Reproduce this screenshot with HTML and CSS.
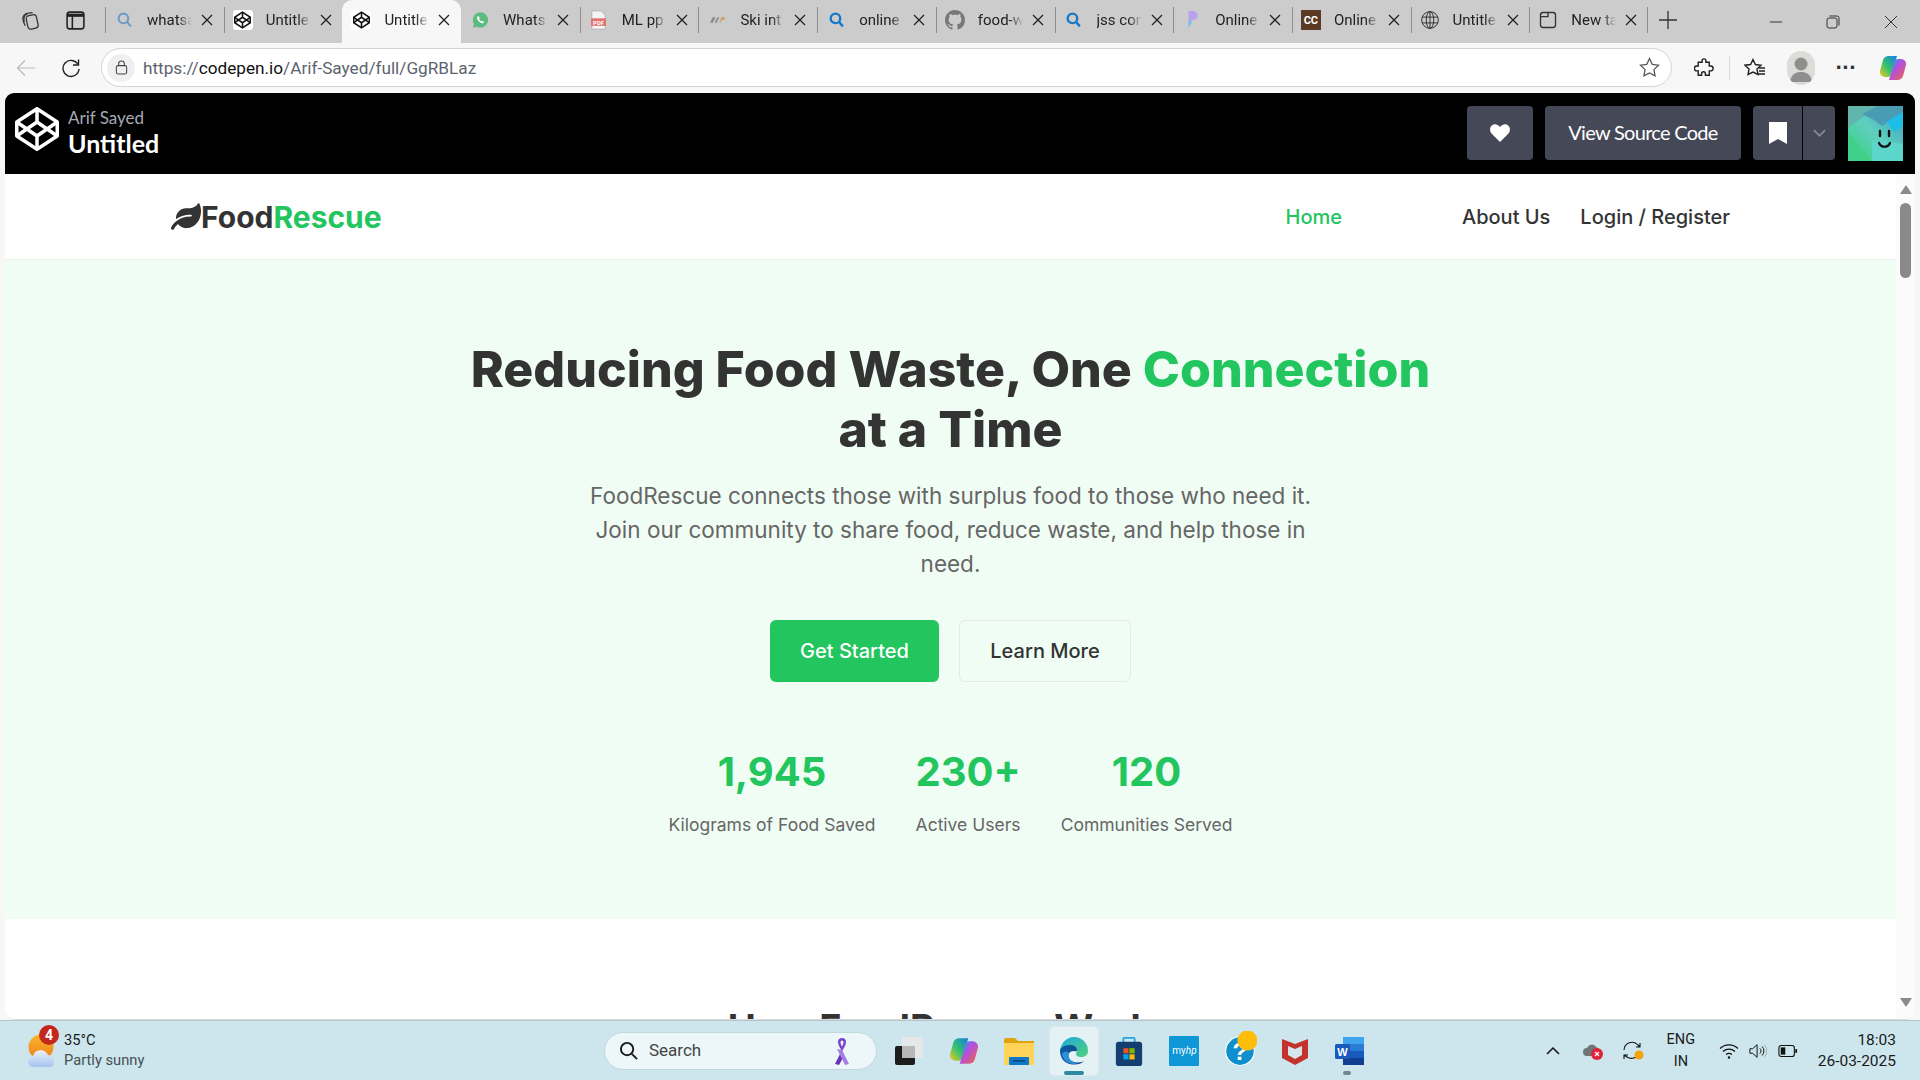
FILE: index.html
```html
<!DOCTYPE html>
<html lang="en">
<head>
<meta charset="utf-8">
<title>FoodRescue</title>
<link rel="stylesheet" href="styles.css">
</head>
<body>
<svg class="defs" width="0" height="0"><defs><symbol id="xi" viewBox="0 0 12 12"><path d="M1 1l10 10M11 1L1 11" fill="none" stroke="#222" stroke-width="1.300"/></symbol></defs></svg>
<div class="browser">
  <div class="tabstrip">
    <div class="strip-btns">
      <svg class="ic20" viewBox="0 0 20 20" fill="none" stroke="#333" stroke-width="1.200"><rect x="6.500" y="5" width="10" height="13" rx="3" transform="rotate(-12 11 11)"/><path d="M5 15C3.500 12 2.500 8 3 6.500 3.500 4.500 6 3 8 3l4-.5"/><path d="M4 11.500C3 8 4 5 7 3.500"/></svg>
      <svg class="ic20" viewBox="0 0 20 20" fill="none" stroke="#222" stroke-width="1.500"><rect x="2" y="2" width="16" height="16" rx="2.500"/><path d="M2 5h16" stroke-width="3"/><path d="M7 5v13"/></svg>
    </div>
    <div class="tab"><div class="tab-in"><span class="fav"><svg viewBox="0 0 16 16" fill="none" stroke="#6f9cc4" stroke-width="2"><circle cx="7" cy="6.500" r="4.500"/><path d="M10.500 10l3.500 4"/></svg></span><span class="tab-t">whatsa</span><svg class="x"><use href="#xi"/></svg></div></div>
    <div class="tab"><div class="tab-in"><span class="fav white"><svg viewBox="0 0 100 100" fill="none" stroke="#111" stroke-width="9"><use href="#cp"/></svg></span><span class="tab-t">Untitle</span><svg class="x"><use href="#xi"/></svg></div></div>
    <div class="tab active"><div class="tab-in"><span class="fav white"><svg viewBox="0 0 100 100" fill="none" stroke="#111" stroke-width="9"><use href="#cp"/></svg></span><span class="tab-t">Untitle</span><svg class="x"><use href="#xi"/></svg></div></div>
    <div class="tab nosep"><div class="tab-in"><span class="fav"><svg viewBox="0 0 20 20"><path d="M10 1a9 9 0 0 0-7.700 13.600L1 19l4.500-1.200A9 9 0 1 0 10 1z" fill="#5dbb80"/><path d="M7 5.500c-1.500 1-1.500 3 .5 5.500s4.500 3.500 6 2.500l.5-1.500-2.200-1.200-1 .8c-1-.5-2-1.500-2.500-2.700l.8-1L8 5.500z" fill="#fff"/></svg></span><span class="tab-t">Whats</span><svg class="x"><use href="#xi"/></svg></div></div>
    <div class="tab"><div class="tab-in"><span class="fav"><svg viewBox="0 0 20 24"><path d="M2 1h11l5 5v17H2z" fill="#f4f4f4" stroke="#aaa"/><rect x="1" y="10" width="18" height="9" fill="#e2726e"/><text x="10" y="17.500" text-anchor="middle" font-size="7" font-weight="700" fill="#fff" font-family="Roboto">PDF</text></svg></span><span class="tab-t">ML pp</span><svg class="x"><use href="#xi"/></svg></div></div>
    <div class="tab"><div class="tab-in"><span class="fav"><svg viewBox="0 0 18 18"><path d="M1 12l3-6h3l-3 6zM6 12l3-6h2l-3 6z" fill="#8a8a8a"/><path d="M11 12l2-6h4l-1 3h-3l-1 3z" fill="#c4a060"/></svg></span><span class="tab-t">Ski int</span><svg class="x"><use href="#xi"/></svg></div></div>
    <div class="tab"><div class="tab-in"><span class="fav"><svg viewBox="0 0 16 16" fill="none" stroke="#1479c9" stroke-width="2.200"><circle cx="7" cy="6.500" r="4.500"/><path d="M10.500 10l3.500 4"/></svg></span><span class="tab-t">online</span><svg class="x"><use href="#xi"/></svg></div></div>
    <div class="tab"><div class="tab-in"><span class="fav big"><svg viewBox="0 0 16 16"><path fill="#777" d="M8 0C3.580 0 0 3.580 0 8c0 3.540 2.290 6.530 5.470 7.590.4.070.55-.17.55-.38 0-.19-.01-.82-.01-1.490-2.010.37-2.530-.49-2.690-.94-.09-.23-.48-.94-.82-1.130-.28-.15-.68-.52-.01-.53.630-.01 1.080.58 1.230.82.720 1.210 1.870.870 2.330.66.070-.52.280-.87.510-1.070-1.780-.2-3.640-.89-3.640-3.950 0-.87.310-1.590.820-2.150-.08-.2-.36-1.020.08-2.120 0 0 .67-.21 2.200.82.640-.18 1.320-.27 2-.27s1.360.09 2 .27c1.530-1.040 2.200-.82 2.200-.82.440 1.100.160 1.920.08 2.120.51.56.82 1.270.82 2.150 0 3.070-1.870 3.750-3.650 3.950.29.250.54.730.54 1.480 0 1.070-.01 1.930-.01 2.200 0 .21.150.46.550.38A8.010 8.010 0 0 0 16 8c0-4.420-3.580-8-8-8z"/></svg></span><span class="tab-t">food-w</span><svg class="x"><use href="#xi"/></svg></div></div>
    <div class="tab"><div class="tab-in"><span class="fav"><svg viewBox="0 0 16 16" fill="none" stroke="#1479c9" stroke-width="2.200"><circle cx="7" cy="6.500" r="4.500"/><path d="M10.500 10l3.500 4"/></svg></span><span class="tab-t">jss con</span><svg class="x"><use href="#xi"/></svg></div></div>
    <div class="tab"><div class="tab-in"><span class="fav"><svg viewBox="0 0 16 20"><path d="M4 1h6l3 3v3l-3 3H7v3l-3 3z" fill="#b9a1ee"/><path d="M4 13l3-3v3l-3 5z" fill="#6fc4ee"/></svg></span><span class="tab-t">Online</span><svg class="x"><use href="#xi"/></svg></div></div>
    <div class="tab"><div class="tab-in"><span class="fav cc">CC</span><span class="tab-t">Online</span><svg class="x"><use href="#xi"/></svg></div></div>
    <div class="tab"><div class="tab-in"><span class="fav big"><svg viewBox="0 0 24 24" fill="none" stroke="#333" stroke-width="1.200"><circle cx="12" cy="12" r="10"/><ellipse cx="12" cy="12" rx="4.500" ry="10"/><path d="M2.500 8.500h19M2.500 15.500h19M12 2v20"/></svg></span><span class="tab-t">Untitle</span><svg class="x"><use href="#xi"/></svg></div></div>
    <div class="tab last"><div class="tab-in"><span class="fav big"><svg viewBox="0 0 24 24" fill="none" stroke="#333" stroke-width="1.600"><rect x="3" y="3" width="18" height="18" rx="3"/><path d="M3 8h9V3"/><path d="M8 14.500h.1M12 14.500h.1M16 14.500h.1" stroke-width="2"/></svg></span><span class="tab-t">New ta</span><svg class="x"><use href="#xi"/></svg></div></div>
    <svg class="plus" viewBox="0 0 18 18" stroke="#333" stroke-width="1.300"><path d="M9 0v18M0 9h18"/></svg>
    <div class="winctl">
      <svg viewBox="0 0 14 14" fill="none" stroke="#333" stroke-width="1"><path d="M1 7h12"/></svg>
      <svg viewBox="0 0 14 14" fill="none" stroke="#333" stroke-width="1"><rect x="1" y="3" width="10" height="10" rx="2"/><path d="M3.500 1h7.500a2 2 0 0 1 2 2v7.500"/></svg>
      <svg viewBox="0 0 14 14" fill="none" stroke="#333" stroke-width="1"><path d="M1 1l12 12M13 1L1 13"/></svg>
    </div>
  </div>

  <div class="toolbar">
    <svg class="back" viewBox="0 0 20 20" fill="none" stroke="#bbb" stroke-width="1.200"><path d="M19 10H1.500M9 2.500L1.500 10 9 17.500"/></svg>
    <svg class="reload" viewBox="0 0 20 20" fill="none" stroke="#222" stroke-width="1.400"><path d="M17 6.500A8 8 0 1 0 18 11"/><path d="M17.500 1.500v5.500h-5.500"/></svg>
    <div class="url">
      <span class="lock"><svg viewBox="0 0 16 16" fill="none" stroke="#444" stroke-width="1.100"><rect x="2.500" y="6" width="11" height="9" rx="2"/><path d="M5 6V4a3 3 0 0 1 6 0v2"/><path d="M8 10.500h.1" stroke-width="1.600"/></svg></span>
      <span class="url-t">https://<b>codepen.io</b>/Arif-Sayed/full/GgRBLaz</span>
      <svg class="star" viewBox="0 0 20 20" fill="none" stroke="#555" stroke-width="1.200"><path d="M10 1.500l2.600 5.500 6 .8-4.400 4.200 1.100 6L10 15.100 4.700 18l1.100-6L1.400 7.800l6-.8z"/></svg>
    </div>
    <div class="tools">
      <svg class="t-ext" viewBox="0 0 20 20" fill="none" stroke="#222" stroke-width="1.500"><path d="M8 2.500a2 2 0 0 1 4 0V4h3.500v4H17a2.500 2.500 0 0 1 0 5h-1.500v4.500h-4V16a2 2 0 0 0-4 0v1.500H4V13H2.500a2.500 2.500 0 0 1 0-5H4V4h4z" transform="scale(.96) translate(.4 .4)"/></svg>
      <span class="t-sep"></span>
      <svg class="t-fav" viewBox="0 0 22 20" fill="none" stroke="#222" stroke-width="1.400"><path d="M9 1.500l2.400 5 5.600.7-4 3.900 1 5.400L9 14l-5 2.500 1-5.400-4-3.900 5.600-.7z"/><path d="M15 10h6M15 13h6M14 16h7"/></svg>
      <span class="profile"><svg viewBox="0 0 28 34"><circle cx="14" cy="13" r="6.500" fill="#8f8f8f"/><path d="M3 31c1-8 6-10 11-10s10 2 11 10z" fill="#8f8f8f"/></svg></span>
      <span class="dots">···</span>
      <svg class="copilot" viewBox="0 0 28 28"><defs><linearGradient id="c1" x1="0" y1="1" x2="1" y2="0"><stop offset="0" stop-color="#f7c81e"/><stop offset=".45" stop-color="#35c26c"/><stop offset="1" stop-color="#0f7fe8"/></linearGradient><linearGradient id="c2" x1="0" y1="0" x2="1" y2="1"><stop offset="0" stop-color="#1f9cf0"/><stop offset=".45" stop-color="#b44fe0"/><stop offset="1" stop-color="#f5672f"/></linearGradient></defs><path d="M9 2h9l-6 19a3 3 0 0 1-3 2H6a5 5 0 0 1-5-6l3-11a6 6 0 0 1 5-4z" fill="url(#c1)"/><path d="M19 26h-9l6-19a3 3 0 0 1 3-2h3a5 5 0 0 1 5 6l-3 11a6 6 0 0 1-5 4z" fill="url(#c2)"/></svg>
    </div>
  </div>

  <div class="window">
    <header class="cp-bar">
      <svg class="cp-logo" viewBox="0 0 100 100" fill="none" stroke="#fff" stroke-width="8" stroke-linejoin="round"><g id="cp"><path d="M50 4l46 30v32L50 96 4 66V34z"/><path d="M50 4v30M50 66v30M4 34l46 32 46-32M4 66l46-32 46 32"/></g></svg>
      <div class="cp-title">
        <div class="cp-author">Arif Sayed</div>
        <div class="cp-name">Untitled</div>
      </div>
      <div class="cp-actions">
        <button class="cp-btn heart"><svg viewBox="0 0 20 18"><path fill="#fff" d="M10 18L2 10C-.5 7.500-.500 3.500 1.800 1.500 4-.5 7.500 0 10 3c2.500-3 6-3.500 8.200-1.500 2.300 2 2.300 6 -.2 8.500z"/></svg></button>
        <button class="cp-btn source">View Source Code</button>
        <div class="cp-split">
          <button class="cp-btn mark"><svg viewBox="0 0 18 22"><path fill="#fff" d="M0 0h18v22l-9-5-9 5z"/></svg></button>
          <button class="cp-btn more"><svg viewBox="0 0 14 8" fill="none" stroke="#8a8d9c" stroke-width="1.800"><path d="M1 1l6 6 6-6"/></svg></button>
        </div>
        <svg class="avatar" viewBox="0 0 55 55"><defs><linearGradient id="av" x1="0" y1="1" x2="1" y2="0"><stop offset="0" stop-color="#39d27a"/><stop offset=".5" stop-color="#5fcfc0"/><stop offset="1" stop-color="#3a9fc0"/></linearGradient></defs><rect width="55" height="55" rx="3" fill="url(#av)"/><path d="M0 0h30L0 22z" fill="#62b5ac"/><path d="M14 8L30 0h25v6L34 20l-8-6z" fill="#4a9cb5"/><path d="M38 16L55 6v14l-8 6z" fill="#1dbde8"/><path d="M0 26l24 29H0z" fill="#3fd08a"/><path d="M24 34l31 4v17H24z" fill="#5cd6ca"/><path d="M32 25v5M41 25v5" stroke="#111" stroke-width="2.400" stroke-linecap="round"/><path d="M31 37c2 5 9 5 11 0" stroke="#111" stroke-width="2.200" fill="none" stroke-linecap="round"/></svg>
      </div>
    </header>

    <div class="frame">
      <div class="page">
        <nav class="nav">
          <a class="logo"><svg viewBox="0 0 576 512"><path fill="#333" d="M546.200 9.700c-5.600-12.500-21.600-13-28.300-1.200C486.900 62.400 431.400 96 368 96h-80C182 96 96 182 96 288c0 7 .8 13.700 1.500 20.500C161.300 262.800 253.400 224 384 224c8.800 0 16 7.200 16 16s-7.200 16-16 16C132.600 256 26 410.100 2.400 468c-6.600 16.300 1.200 34.900 17.500 41.600 16.400 6.800 35-1.100 41.800-17.300 1.500-3.600 20.900-47.900 71.900-90.600 32.400 43.900 94 85.800 174.900 77.200C465.500 467.500 576 326.700 576 154.300c0-50.200-10.800-102.200-29.800-144.600z"/></svg><span>Food</span><span class="green">Rescue</span></a>
          <div class="links">
            <a class="green home">Home</a>
            <a>About Us</a>
            <a>Login / Register</a>
          </div>
        </nav>
        <section class="hero">
          <h1>Reducing Food Waste, One <span class="green">Connection</span><br>at a Time</h1>
          <p class="lead">FoodRescue connects those with surplus food to those who need it. Join our community to share food, reduce waste, and help those in need.</p>
          <div class="cta">
            <a class="btn primary">Get Started</a>
            <a class="btn ghost">Learn More</a>
          </div>
          <div class="stats">
            <div class="stat"><div class="num">1,945</div><div class="lbl">Kilograms of Food Saved</div></div>
            <div class="stat"><div class="num">230+</div><div class="lbl">Active Users</div></div>
            <div class="stat"><div class="num">120</div><div class="lbl">Communities Served</div></div>
          </div>
        </section>
        <section class="how"><h2>How FoodRescue Works</h2></section>
      </div>
      <div class="scrollbar">
        <span class="arrow up"></span>
        <span class="thumb"></span>
        <span class="arrow down"></span>
      </div>
    </div>
  </div>

  <footer class="taskbar">
    <div class="weather">
      <span class="w-icon">
        <svg viewBox="0 0 28 36"><defs><linearGradient id="sun" x1="0" y1="0" x2="0" y2="1"><stop offset="0" stop-color="#f9b82a"/><stop offset="1" stop-color="#ee7f1c"/></linearGradient><linearGradient id="cl" x1="0" y1="0" x2="0" y2="1"><stop offset="0" stop-color="#e9f1fb"/><stop offset="1" stop-color="#a5c3ef"/></linearGradient></defs><circle cx="13" cy="14" r="12.500" fill="url(#sun)"/><path d="M6 34a5.500 5.500 0 0 1-1-11 8 8 0 0 1 15-1 6.500 6.500 0 0 1 3 12z" fill="url(#cl)"/></svg>
        <span class="badge">4</span>
      </span>
      <div class="w-text"><div>35°C</div><div class="w-sub">Partly sunny</div></div>
    </div>
    <div class="search">
      <svg class="s-ic" viewBox="0 0 20 20" fill="none" stroke="#1a1a1a" stroke-width="2"><circle cx="8.500" cy="8.500" r="6.500"/><path d="M13.500 13.500L19 19"/></svg>
      <span class="s-t">Search</span>
      <svg class="ribbon" viewBox="0 0 22 30"><path d="M11 14L4 28l4 1 5-9z" fill="#6a34b8"/><path d="M11 14l7 14-4 1-8-16z" fill="#a67ce4"/><path d="M7 6a4 4 0 0 1 8 0c0 3-2 6-4 9-2-3-4-6-4-9zm2.500 0c0 1.500.8 3 1.500 4.500.7-1.500 1.500-3 1.500-4.500a1.500 1.500 0 0 0-3 0z" fill="#7a45cc"/></svg>
    </div>
    <div class="apps">
      <span class="app"><svg viewBox="0 0 30 30"><rect x="1" y="10" width="20" height="19" rx="2" fill="#1c1c1c"/><rect x="8" y="1" width="21" height="21" rx="2" fill="#e8e8e8" opacity=".9"/><rect x="8" y="10" width="13" height="12" fill="#b8b8b8"/></svg></span>
      <span class="app"><svg viewBox="0 0 28 28"><path d="M9 2h9l-6 19a3 3 0 0 1-3 2H6a5 5 0 0 1-5-6l3-11a6 6 0 0 1 5-4z" fill="url(#c1)"/><path d="M19 26h-9l6-19a3 3 0 0 1 3-2h3a5 5 0 0 1 5 6l-3 11a6 6 0 0 1-5 4z" fill="url(#c2)"/></svg></span>
      <span class="app"><svg viewBox="0 0 30 30"><path d="M0 4a2 2 0 0 1 2-2h9l3 3h16v5H0z" fill="#dfa30d"/><path d="M0 7h30v21a1 1 0 0 1-1 1H1a1 1 0 0 1-1-1z" fill="#ffd357"/><rect x="5" y="21" width="20" height="8" rx="1" fill="#0d78c8"/><rect x="9" y="24" width="12" height="1.500" fill="#06406e"/></svg></span>
      <span class="app on"><svg viewBox="0 0 30 30"><defs><linearGradient id="e1" x1="0" y1="0" x2="1" y2="0"><stop offset="0" stop-color="#0c59a4"/><stop offset="1" stop-color="#114a8b"/></linearGradient><linearGradient id="e2" x1="0" y1="0" x2="1" y2="1"><stop offset="0" stop-color="#1fa8e0"/><stop offset="1" stop-color="#4fd27a"/></linearGradient></defs><path d="M15 1a14 14 0 0 1 14 14c0 4-3 6-7 6-3 0-5-1-5-3 0-1 1-1.500 1-3 0-3-3-5-7-5C6 10 2 13 1 16 1 8 7 1 15 1z" fill="url(#e2)"/><path d="M1 15c0-3 4-6 10-6 4 0 7 2 7 5 0 .5-.5 1-.5 1.500-2-1-7-1-8 3-1 5 4 8 9 8 3 0 6-1 7-2-3 3-6 4-10 4C7 29 1 23 1 15z" fill="url(#e1)"/><path d="M10 17c-2 5 3 10 9 10-6 3-15-1-16-9 1-2 4-4 7-1z" fill="#2d8fd6"/></svg><i class="pill active-pill"></i></span>
      <span class="app"><svg viewBox="0 0 30 32"><path d="M9 8V3a1 1 0 0 1 1-1h10a1 1 0 0 1 1 1v5" fill="none" stroke="#22a7e0" stroke-width="2"/><rect x="1" y="6" width="28" height="26" rx="3" fill="#123e70"/><rect x="9" y="13" width="5.500" height="5.500" fill="#f25022"/><rect x="15.500" y="13" width="5.500" height="5.500" fill="#7fba00"/><rect x="9" y="19.500" width="5.500" height="5.500" fill="#00a4ef"/><rect x="15.500" y="19.500" width="5.500" height="5.500" fill="#ffb900"/></svg></span>
      <span class="app"><span class="myhp">my<i>hp</i></span></span>
      <span class="app help"><svg viewBox="0 0 30 34"><circle cx="15" cy="19" r="13.500" fill="#0f8fce" stroke="#fff" stroke-width="1"/><text x="15" y="27" text-anchor="middle" font-size="23" font-weight="700" fill="#fff" font-family="Liberation Sans">?</text><circle cx="22" cy="9" r="9.500" fill="#fdbd0a"/></svg></span>
      <span class="app"><svg viewBox="0 0 28 30"><path d="M1 3l13 5 13-5v19L14 29 1 22z" fill="#c4322c"/><path d="M7 10l7 3 7-3v9l-7 4-7-4z" fill="#d4e6ec"/></svg></span>
      <span class="app"><svg viewBox="0 0 30 30"><rect x="8" y="1" width="21" height="28" rx="2" fill="#2b7cd3"/><rect x="8" y="1" width="21" height="7" fill="#41a5ee"/><rect x="8" y="15" width="21" height="7" fill="#185abd"/><rect x="8" y="22" width="21" height="7" fill="#103f91"/><rect x="0" y="8" width="15" height="15" rx="1.500" fill="#185abd"/><text x="7.500" y="20" text-anchor="middle" font-size="11" font-weight="700" fill="#fff" font-family="Liberation Sans">W</text></svg><i class="pill"></i></span>
    </div>
    <div class="tray">
      <svg class="tr chev" viewBox="0 0 14 8" fill="none" stroke="#111" stroke-width="1.500"><path d="M1 7l6-6 6 6"/></svg>
      <span class="tr cloud"><svg viewBox="0 0 22 20"><path d="M5 15a4 4 0 0 1 0-8 5 5 0 0 1 9-1 4 4 0 0 1 3 4v5z" fill="#6e7578"/><circle cx="15" cy="13" r="6" fill="#e0233a"/><path d="M13 11l4 4M17 11l-4 4" stroke="#fff" stroke-width="1.200"/></svg></span>
      <span class="tr sync"><svg viewBox="0 0 22 22" fill="none" stroke="#111" stroke-width="1.100"><path d="M2 10a8 8 0 0 1 14-5l2 2M18 3v4h-4"/><path d="M17 13a8 8 0 0 1-12 4l-3-2M2 19v-4h4"/><circle cx="17" cy="15" r="4.500" fill="#f5a30a" stroke="none"/></svg></span>
      <div class="lang"><div>ENG</div><div>IN</div></div>
      <svg class="tr wifi" viewBox="0 0 20 16" fill="none" stroke="#111" stroke-width="1.300"><path d="M1 5.500a13 13 0 0 1 18 0M4 8.500a9 9 0 0 1 12 0M7 11.500a5 5 0 0 1 6 0"/><circle cx="10" cy="14.500" r="1.200" fill="#111" stroke="none"/></svg>
      <svg class="tr vol" viewBox="0 0 20 18" fill="none" stroke="#111" stroke-width="1.100"><path d="M1 6.500h3L9 2v14l-5-4.500H1z"/><path d="M12 6a4 4 0 0 1 0 6M14.500 4a7 7 0 0 1 0 10"/><path d="M17 2a10 10 0 0 1 0 14" stroke="#aaa"/></svg>
      <svg class="tr batt" viewBox="0 0 22 14" fill="none" stroke="#111" stroke-width="1.200"><rect x="1" y="1" width="17" height="12" rx="2.500"/><rect x="3" y="3" width="5" height="8" fill="#111" stroke="none"/><path d="M20 5v4" stroke-width="2"/></svg>
      <div class="clock"><div>18:03</div><div>26-03-2025</div></div>
    </div>
  </footer>
</div>
</body>
</html>
```

FILE: styles.css
```css
* { box-sizing: border-box; }
html, body { margin: 0; height: 100%; overflow: hidden; }
body { font-family: "Inter", "Liberation Sans", sans-serif; background: #f7f7f7; }
a { text-decoration: none; color: inherit; }
svg { display: block; }
svg.defs { position: absolute; }

.browser { display: flex; flex-direction: column; width: 1920px; height: 1080px; }

/* tab strip */
.tabstrip { display: flex; height: 43px; background: #cccccc; padding-left: 20px; flex: none; }
.strip-btns { display: flex; gap: 24px; width: 85px; align-items: center; padding-bottom: 2px; }
.ic20 { width: 21px; height: 21px; }
.tab { width: 118.7px; display: flex; align-items: center; height: 43px; }
.tab-in { flex: 1; height: 26px; margin-bottom: 3px; border-left: 1px solid #8c8c8c; display: flex; align-items: center; padding-left: 8px; }
.tab.active { background: #f7f7f7; border-radius: 10px 10px 0 0; }
.tab.active .tab-in, .tab.nosep .tab-in { border-left-color: transparent; }
.tab.last .tab-in { border-right: 1px solid #8c8c8c; }
.fav { width: 20px; height: 20px; flex: none; display: flex; align-items: center; justify-content: center; }
.fav svg { width: 17px; height: 20px; }
.fav.big svg { width: 20px; height: 20px; }
.fav.white { background: #fff; border-radius: 3px; }
.fav.cc { background: #5a3a22; color: #fff; font: 700 11px "Roboto", sans-serif; }
.tab-t { width: 45px; margin-left: 13px; font: 400 15px/20px "Roboto", sans-serif; color: #222; white-space: nowrap; -webkit-mask-image: linear-gradient(90deg, #000 70%, transparent 100%); mask-image: linear-gradient(90deg, #000 70%, transparent 100%); }
.x { width: 12px; height: 12px; margin-left: 9px; flex: none; }
.plus { width: 18px; height: 18px; align-self: center; margin: 0 0 3px 11px; flex: none; }
.winctl { display: flex; margin-left: 92px; gap: 43.500px; align-items: center; }
.winctl svg { width: 14px; height: 14px; }

/* toolbar */
.toolbar { display: flex; align-items: center; height: 50px; padding: 3px 0 4px 16px; background: #f7f7f7; flex: none; }
.back { width: 20px; height: 20px; flex: none; }
.reload { width: 20px; height: 20px; margin-left: 25px; flex: none; }
.url { width: 1571px; height: 39px; margin-left: 20px; background: #fff; border: 1px solid #d4d4d4; border-radius: 20px; display: flex; align-items: center; padding: 0 9px 0 5px; flex: none; }
.lock { width: 28px; height: 28px; border-radius: 50%; background: #f0f0f0; display: flex; align-items: center; justify-content: center; flex: none; }
.lock svg { width: 15px; height: 15px; }
.url-t { margin-left: 8px; font: 400 17.200px "Roboto", sans-serif; color: #5c6470; flex: 1; }
.url-t b { font-weight: 400; color: #111; }
.star { width: 21px; height: 21px; margin-right: 2px; flex: none; }
.tools { display: flex; align-items: center; flex: 1; padding-left: 22px; }
.t-ext { width: 20px; height: 22px; flex: none; }
.t-sep { width: 1px; height: 24px; background: #dadada; margin: 0 14px 0 15px; }
.t-fav { width: 22px; height: 20px; flex: none; }
.profile { width: 28px; height: 34px; border-radius: 14px; background: #dcdcd8; overflow: hidden; margin-left: 21px; flex: none; }
.profile svg { width: 28px; height: 34px; }
.dots { margin-left: 20px; font: 700 18px/20px "DejaVu Sans", sans-serif; color: #333; width: 21px; text-align: center; }
.copilot { width: 28px; height: 30px; margin-left: 23px; flex: none; }

/* window */
.window { height: 927px; margin: 0 5px; border-radius: 9px; background: #fff; border-bottom: 1px solid #dcdcdc; overflow: hidden; display: flex; flex-direction: column; flex: none; }
.cp-bar { height: 81px; flex: none; background: #000; display: flex; align-items: center; padding: 0 12px 1px 10px; font-family: "Lato", sans-serif; }
.cp-logo { width: 44px; height: 44px; flex: none; margin-bottom: 9px; }
.cp-title { margin-left: 9px; color: #fff; }
.cp-author { font-size: 17px; line-height: 20px; color: #a6a9b6; margin-top: -1px; }
.cp-name { font-size: 25px; font-weight: 700; line-height: 30px; }
.cp-actions { margin-left: auto; display: flex; align-items: center; gap: 12px; }
.cp-btn { height: 54px; border: 0; background: #444857; color: #fff; border-radius: 4px; display: flex; align-items: center; justify-content: center; font: 400 20px "Lato", sans-serif; padding: 0; }
.heart { width: 66px; }
.heart svg { width: 20px; height: 18px; }
.source { width: 196px; letter-spacing: -.7px; padding-bottom: 2px; }
.cp-split { display: flex; gap: 1px; }
.mark { width: 49px; border-radius: 4px 0 0 4px; }
.mark svg { width: 18px; height: 22px; }
.more { width: 32px; border-radius: 0 4px 4px 0; }
.more svg { width: 13px; height: 8px; }
.avatar { width: 55px; height: 55px; margin-left: 1px; flex: none; }

.frame { flex: 1; display: flex; min-height: 0; background: #fff; }
.page { flex: 1; min-width: 0; overflow: hidden; color: #333; }
.nav { height: 86px; display: flex; align-items: center; justify-content: space-between; padding: 0 166px; border-bottom: 1px solid #e9f3ec; }
.logo { display: flex; align-items: center; font-size: 30px; font-weight: 700; color: #333; }
.logo svg { width: 30px; height: 27px; }
.green { color: #22c55e; }
.links { display: flex; font-size: 20px; line-height: 28px; font-weight: 500; gap: 30px; padding-top: 1px; }
.home { margin-right: 90px; }
.hero { height: 659px; background: #f0fdf4; padding-top: 79px; display: flex; flex-direction: column; align-items: center; text-align: center; }
h1 { margin: 0; font-size: 50px; line-height: 60px; font-weight: 800; color: #333; }
.lead { margin: 20px 0 0; width: 736px; font-size: 22.500px; line-height: 34px; color: #666; }
.cta { display: flex; gap: 20px; margin-top: 39px; }
.btn { height: 62px; display: flex; align-items: center; justify-content: center; border-radius: 6px; font-size: 20px; font-weight: 500; }
.primary { width: 169px; background: #22c55e; color: #fff; }
.ghost { width: 172px; border: 1px solid #e5e9ec; color: #333; }
.stats { display: flex; gap: 40px; margin-top: 60px; }
.num { font-size: 40px; line-height: 60px; font-weight: 700; color: #22c55e; }
.lbl { margin-top: 9px; font-size: 17.500px; line-height: 28px; color: #666; }
.how { padding-top: 85px; text-align: center; }
h2 { margin: 0; font-size: 37.600px; line-height: 50px; font-weight: 700; color: #333; }

.scrollbar { width: 19px; flex: none; background: #fbfbfb; display: flex; flex-direction: column; align-items: center; padding: 11px 0 12px; }
.arrow { width: 0; height: 0; border-left: 6px solid transparent; border-right: 6px solid transparent; flex: none; }
.up { border-bottom: 9px solid #8a8a8a; }
.down { border-top: 9px solid #8a8a8a; margin-top: auto; }
.thumb { width: 11px; height: 75px; background: #8a8a8a; border-radius: 6px; margin-top: 9px; }

/* taskbar */
.taskbar { margin-top: auto; height: 60px; flex: none; background: #cde6ed; border-top: 1px solid #b4c6cc; display: flex; align-items: center; }
.weather { width: 604px; display: flex; align-items: center; padding-left: 28px; flex: none; }
.w-icon { position: relative; width: 28px; height: 36px; flex: none; }
.w-icon svg { width: 28px; height: 36px; }
.badge { position: absolute; left: 11px; top: -8px; width: 20px; height: 20px; border-radius: 50%; background: #c4281c; color: #fff; font: 700 14px/20px "Roboto", sans-serif; text-align: center; }
.w-text { margin-left: 8px; margin-bottom: 2px; font: 400 14.700px/20px "Roboto", sans-serif; color: #1a1a1a; }
.w-sub { color: #444e52; }
.search { width: 273px; height: 38px; background: #edf6f9; border: 1px solid #c2d8df; border-radius: 19px; display: flex; align-items: center; padding: 0 22px 0 14px; flex: none; }
.s-ic { width: 19px; height: 19px; flex: none; }
.s-t { margin-left: 11px; font: 400 17px/20px "Roboto", sans-serif; color: #444; flex: 1; padding-bottom: 2px; }
.ribbon { width: 24px; height: 30px; flex: none; }
.apps { display: flex; margin-left: 8px; flex: none; }
.app { position: relative; width: 48px; height: 48px; margin-right: 7.100px; display: flex; align-items: center; justify-content: center; }
.app svg { width: 30px; height: 30px; }
.app.on { background: #e4f1f5; border-radius: 5px; box-shadow: 0 0 0 1px #dcebf0; }
.pill { position: absolute; bottom: 0; left: 17px; width: 8px; height: 4px; border-radius: 2px; background: #74858b; }
.active-pill { left: 14px; width: 20px; background: #2a8ba3; }
.myhp { width: 30px; height: 30px; background: #0f96d6; color: #fff; font: 400 10px/30px "Roboto", sans-serif; text-align: center; border-radius: 1px; }
.help svg { width: 34px; height: 36px; margin-top: -4px; }
.tray { display: flex; align-items: center; margin-left: 165px; flex: 1; color: #1a1a1a; }
.tr { flex: none; }
.chev { width: 14px; height: 8px; }
.cloud { width: 22px; height: 20px; margin-left: 22px; }
.sync { width: 22px; height: 22px; margin-left: 18px; }
.tr svg { width: 100%; height: 100%; }
.lang { width: 40px; margin-left: 17px; text-align: center; font: 400 14.500px/22px "Roboto", sans-serif; }
.wifi { width: 20px; height: 16px; margin-left: 18px; }
.vol { width: 18px; height: 18px; margin-left: 10px; }
.batt { width: 20px; height: 14px; margin-left: 11px; }
.clock { margin-left: auto; padding-right: 24px; text-align: right; font: 400 15.500px/21px "Roboto", sans-serif; }
```
